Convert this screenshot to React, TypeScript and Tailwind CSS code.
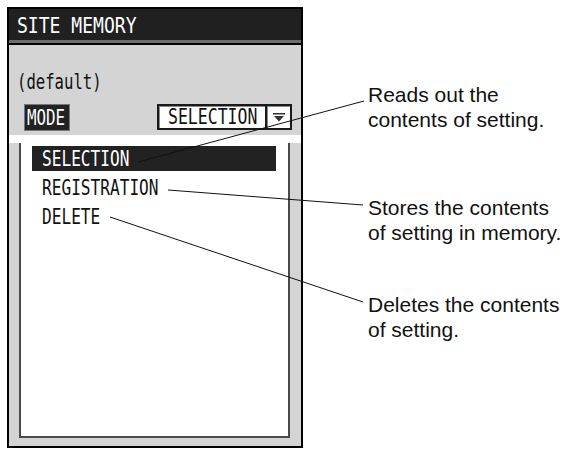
import * as React from 'react';

// --- OSD font: narrow mono, scaled horizontally ---
const osd = "font-['DejaVu_Sans_Mono',monospace]";

interface OsdTextProps {
  children?: React.ReactNode;
  className?: string;
}

const OsdText = ({ children, className }: OsdTextProps) => (
  <span className={`${osd} inline-block origin-left whitespace-nowrap ${className ?? ''}`}>{children}</span>
);

const menuItems = ['SELECTION', 'REGISTRATION', 'DELETE'];

const callouts = [
  { top: 'mt-[82px]', lines: ['Reads out the', 'contents of setting.'] },
  { top: 'mt-[63px]', lines: ['Stores the contents', 'of setting in memory.'] },
  { top: 'mt-[47px]', lines: ['Deletes the contents', 'of setting.'] },
];

function DropArrow() {
  return (
    <svg width="12" height="9" viewBox="0 0 12 9" className="block">
      <rect x="0" y="0" width="12" height="1.5" fill="#333" />
      <polygon points="1,3 11,3 6,8.5" fill="#333" />
    </svg>
  );
}

function SiteMemoryPanel() {
  return (
    <div className="ml-[7px] mt-[7px] w-[296px] h-[441px] border-2 border-black bg-[#d4d4d4] flex flex-col">
      {/* title bar */}
      <div className="flex flex-col">
        <div className="h-[31px] bg-[#202020] pl-[8px] pt-[3px]">
          <OsdText className="text-[21px] leading-[28px] text-white scale-x-[0.86]">SITE MEMORY</OsdText>
        </div>
        <div className="h-[3px] bg-[#6e6e6e]" />
        <div className="h-[2px] bg-black" />
      </div>

      {/* settings */}
      <div className="pl-[8px] mt-[24px] h-[25px]">
        <OsdText className="text-[22px] leading-[25px] text-[#111] scale-x-[0.71]">(default)</OsdText>
      </div>
      <div className="mt-[10px] flex items-center h-[26px]">
        <div className="ml-[16px] w-[44px] h-[25px] bg-[#222] outline outline-1 outline-[#777] pl-[2px]">
          <OsdText className="w-[44px] text-[22px] leading-[25px] text-white scale-x-[0.72]">MODE</OsdText>
        </div>
        <div className="ml-[88px] w-[135px] h-[26px] border-2 border-[#1a1a1a] bg-white flex shadow-[inset_1px_1px_0_#8a8a8a]">
          <div className="flex-1 pl-[9px]">
            <OsdText className="w-[90px] text-[22px] leading-[22px] text-[#111] scale-x-[0.75]">SELECTION</OsdText>
          </div>
          <div className="w-[25px] border-l-2 border-[#1a1a1a] flex items-center justify-center shadow-[inset_1px_1px_0_#8a8a8a]">
            <DropArrow />
          </div>
        </div>
      </div>

      {/* list */}
      <div className="mt-[5px] flex-1 flex flex-col">
        <div className="h-[8px] bg-white" />
        <div className="flex-1 flex pl-[10px] pr-[11px] pb-[8px]">
          <div className="flex-1 bg-white border-l-2 border-r-2 border-b-2 border-[#4a4a4a] pt-[3px] pl-[11px] pr-[12px] flex flex-col gap-[4px]">
            {menuItems.map((item, i) => (
              <div
                key={item}
                className={`h-[25px] pl-[10px] ${i === 0 ? 'bg-[#222] text-white' : 'text-[#111]'}`}
              >
                <OsdText className="text-[22px] leading-[25px] scale-x-[0.733]">{item}</OsdText>
              </div>
            ))}
          </div>
        </div>
      </div>
    </div>
  );
}

export default function App() {
  return (
    <div className="relative w-[567px] h-[449px] bg-white flex overflow-hidden">
      <SiteMemoryPanel />

      {/* callout texts */}
      <div className="ml-[65px] flex flex-col font-['Liberation_Sans',Arial,sans-serif] text-[21px] leading-[25px] text-[#111]">
        {callouts.map((c) => (
          <p key={c.lines[0]} className={`${c.top} whitespace-nowrap`}>
            {c.lines[0]}
            <br />
            {c.lines[1]}
          </p>
        ))}
      </div>

      {/* leader lines */}
      <svg className="absolute inset-0 pointer-events-none" width="567" height="449">
        <line x1="138" y1="162" x2="364" y2="101" stroke="#111" strokeWidth="1" />
        <line x1="168" y1="190" x2="363" y2="205" stroke="#111" strokeWidth="1" />
        <line x1="110" y1="217" x2="363" y2="302" stroke="#111" strokeWidth="1" />
      </svg>
    </div>
  );
}
